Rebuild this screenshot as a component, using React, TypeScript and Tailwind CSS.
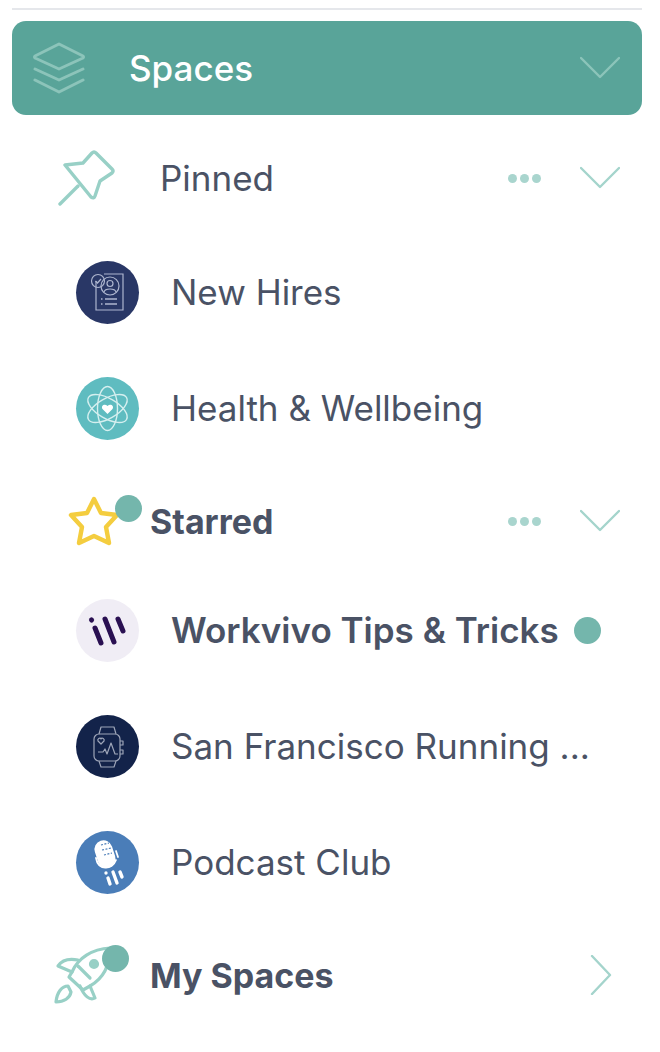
import type { ReactNode } from "react";

// Thin chevrons in the Workvivo sidebar
function ChevronDown({ className }: { className: string }) {
  return (
    <svg viewBox="0 0 40 24" fill="none" className={`h-6 w-10 ${className}`}>
      <path d="M1 2 L20 21 L39 2" stroke="currentColor" strokeWidth="2.4" strokeLinecap="round" strokeLinejoin="round" />
    </svg>
  );
}

function ChevronRight() {
  return (
    <svg viewBox="0 0 24 40" fill="none" className="h-10 w-6 text-[#a4d4cc]">
      <path d="M3 1 L21 20 L3 39" stroke="currentColor" strokeWidth="2.4" strokeLinecap="round" strokeLinejoin="round" />
    </svg>
  );
}

function Dots() {
  return (
    <div className="flex gap-[3px]">
      <span className="h-[9px] w-[9px] rounded-full bg-[#a9d5ce]" />
      <span className="h-[9px] w-[9px] rounded-full bg-[#a9d5ce]" />
      <span className="h-[9px] w-[9px] rounded-full bg-[#a9d5ce]" />
    </div>
  );
}

function LayersIcon() {
  return (
    <svg viewBox="0 0 52 52" fill="none" className="h-[52px] w-[52px] text-[#8cc4ba]" stroke="currentColor" strokeWidth="3" strokeLinecap="round" strokeLinejoin="round">
      <path d="M26 2 L50 14 Q51 15 50 16 L26 27 L2 16 Q1 15 2 14 Z" />
      <path d="M2 27 L26 38 L50 27" />
      <path d="M2 38 L26 50 L50 38" />
    </svg>
  );
}

function PinIcon() {
  return (
    <svg viewBox="0 0 58 56" fill="none" className="h-[56px] w-[58px] text-[#98d0c6]" stroke="currentColor" strokeWidth="3.4" strokeLinecap="round" strokeLinejoin="round">
      <path d="M2 54 L20 36" />
      <path d="M7 15 L25 13 L34 3 Q36 1 38 3 L54 19 Q56 21 54 23 L42 31 L37 46 Q36 49 33 47 Z" />
    </svg>
  );
}

function StarIcon() {
  return (
    <svg viewBox="0 0 52 50" fill="none" className="h-[50px] w-[52px] text-[#f4cd3f]" stroke="currentColor" strokeWidth="4.4" strokeLinejoin="round">
      <path d="M26 3 L33 17 L49 19 L38 31 L41 47 L26 40 L11 47 L14 31 L3 19 L19 17 Z" />
    </svg>
  );
}

function RocketIcon() {
  return (
    <svg viewBox="0 0 66 58" fill="none" className="h-[58px] w-[66px] text-[#98d0c6]" stroke="currentColor" strokeWidth="3.2" strokeLinecap="round" strokeLinejoin="round">
      <path d="M18 26 C24 12 38 3 56 2 C56 18 50 32 36 40 L29 44 L15 31 Z" />
      <circle cx="40" cy="18" r="3.5" fill="currentColor" />
      <path d="M18 26 L4 20 C8 14 14 12 24 14" />
      <path d="M36 40 L41 52 C36 55 30 50 26 40" />
      <path d="M24 20 L36 32" />
      <path d="M14 40 C8 40 3 46 2 56 C10 56 16 52 17 46 Z" />
    </svg>
  );
}

function NewHiresArt() {
  return (
    <svg viewBox="0 0 63 63" fill="none" className="h-full w-full" stroke="#aeb6cf" strokeWidth="1.2">
      <path d="M20 20 V49 H47 V13 H28" />
      <circle cx="22" cy="20" r="6.5" />
      <path d="M19.5 20 L21.5 22 L25 18" />
      <circle cx="34" cy="25" r="9" />
      <circle cx="34" cy="22.5" r="3" />
      <path d="M28 31 C29 27 39 27 40 31" />
      <path d="M29 38 H41 M29 43 H41 M25 38 H26.5 M25 43 H26.5" strokeWidth="1.4" />
    </svg>
  );
}

function AtomArt() {
  return (
    <svg viewBox="0 0 63 63" fill="none" className="h-full w-full" stroke="#d5efef" strokeWidth="1.4">
      <ellipse cx="31.5" cy="31.5" rx="10" ry="22" />
      <ellipse cx="31.5" cy="31.5" rx="10" ry="22" transform="rotate(60 31.5 31.5)" />
      <ellipse cx="31.5" cy="31.5" rx="10" ry="22" transform="rotate(-60 31.5 31.5)" />
      <path d="M31.5 37 L26.5 32 C24.5 29 28.5 26 31.5 29 C34.5 26 38.5 29 36.5 32 Z" fill="#ffffff" stroke="none" />
    </svg>
  );
}

function WorkvivoArt() {
  return (
    <svg viewBox="0 0 63 63" fill="none" className="h-full w-full" stroke="#2a1052" strokeWidth="5" strokeLinecap="round">
      <path d="M15.5 21 L15.6 21.1" />
      <path d="M19 29 L25 44" />
      <path d="M29 20 L38 43" />
      <path d="M42 20 L47 32" />
    </svg>
  );
}

function WatchArt() {
  return (
    <svg viewBox="0 0 63 63" fill="none" className="h-full w-full" stroke="#9ea5b8" strokeWidth="1.2" strokeLinejoin="round">
      <rect x="18" y="19" width="26" height="27" rx="5" />
      <path d="M23 19 L25 12 H38 L40 19 M23 46 L25 52 H38 L40 46" />
      <path d="M44 26 H47 V30 H44 M44 35 H47 V39 H44" />
      <path d="M22 37 H27 L29 34 L31 39 L35 28 L39 39 H42" />
      <path d="M25 29 L22 26 C21 24 24 22 25 24 C26 22 29 24 28 26 Z" />
    </svg>
  );
}

function PodcastArt() {
  return (
    <svg viewBox="0 0 63 63" fill="none" className="h-full w-full">
      <rect x="20" y="9" width="18" height="28" rx="9" transform="rotate(-18 29 23)" fill="#ffffff" />
      <path d="M25 14 L33 12 M26 19 L35 17 M28 24 L36 22" stroke="#4a7db8" strokeWidth="1.2" strokeDasharray="2 1.5" />
      <path d="M20 27 C22 39 36 40 40 29 M40 20 L42 26" stroke="#ffffff" strokeWidth="1.8" strokeLinecap="round" />
      <g stroke="#ffffff" strokeWidth="3.4" strokeLinecap="round">
        <path d="M30 42 L30 42.1 M32 47 L34 53 M37 41 L41 52 M44 41 L46 46" />
      </g>
    </svg>
  );
}

function SectionRow({ icon, label, bold, right, className }: { icon: ReactNode; label: string; bold?: boolean; right: ReactNode; className: string }) {
  return (
    <div className={`flex h-[102px] items-center ${className}`}>
      <div className={`relative flex shrink-0 items-center justify-end ${bold ? "w-[126px] pr-[4px]" : "w-[104px]"}`}>{icon}</div>
      <span className={`flex-1 text-[#4a5265] ${bold ? "pl-[12px] text-[34px] font-bold" : "pl-[44px] text-[35px]"}`}>{label}</span>
      {right}
    </div>
  );
}

function SpaceRow({ art, bg, label, bold, unread }: { art: ReactNode; bg: string; label: string; bold?: boolean; unread?: boolean }) {
  return (
    <div className="flex h-[116px] items-center pl-[64px]">
      <div className={`h-[63px] w-[63px] shrink-0 overflow-hidden rounded-full ${bg}`}>{art}</div>
      <span className={`ml-[32px] whitespace-nowrap text-[35px] text-[#4a5265] ${bold ? "font-semibold" : ""}`}>{label}</span>
      {unread && <span className="ml-[15px] h-[27px] w-[27px] rounded-full bg-[#74b6ac]" />}
    </div>
  );
}

export default function App() {
  return (
    <div className="h-[1052px] w-[660px] overflow-hidden bg-white pl-[12px] pr-[18px] pt-[8px] font-['Inter',sans-serif]">
      <div className="h-[2px] bg-[#e5e7eb]" />
      <div className="mt-[11px] flex h-[94px] items-center rounded-[14px] bg-[#59a499] pl-[21px] pr-[22px]">
        <LayersIcon />
        <span className="ml-[44px] flex-1 text-[35px] font-medium text-white">Spaces</span>
        <ChevronDown className="text-[#8cc4ba]" />
      </div>

      <SectionRow
        className="mt-[12px] mb-[5px]"
        icon={<PinIcon />}
        label="Pinned"
        right={
          <div className="flex items-center gap-[39px] pr-[22px]">
            <Dots />
            <ChevronDown className="text-[#a4d4cc]" />
          </div>
        }
      />
      <SpaceRow art={<NewHiresArt />} bg="bg-[#293766]" label="New Hires" />
      <SpaceRow art={<AtomArt />} bg="bg-[#5fbcc0]" label="Health & Wellbeing" />

      <SectionRow
        className="mt-[4px]"
        bold
        icon={
          <div className="relative mr-[14px]">
            <StarIcon />
            <span className="absolute -right-[22px] -top-[1px] h-[27px] w-[27px] rounded-full bg-[#74b6ac]" />
          </div>
        }
        label="Starred"
        right={
          <div className="flex items-center gap-[39px] pr-[22px]">
            <Dots />
            <ChevronDown className="text-[#a4d4cc]" />
          </div>
        }
      />
      <SpaceRow art={<WorkvivoArt />} bg="bg-[#f0edf5]" label="Workvivo Tips & Tricks" bold unread />
      <SpaceRow art={<WatchArt />} bg="bg-[#13234a]" label="San Francisco Running ..." />
      <SpaceRow art={<PodcastArt />} bg="bg-[#4a7db8]" label="Podcast Club" />

      <SectionRow
        className="mt-[4px]"
        bold
        icon={
          <div className="relative mr-[14px]">
            <RocketIcon />
            <span className="absolute -right-[9px] -top-[1px] h-[27px] w-[27px] rounded-full bg-[#74b6ac]" />
          </div>
        }
        label="My Spaces"
        right={
          <div className="pr-[29px]">
            <ChevronRight />
          </div>
        }
      />
    </div>
  );
}
